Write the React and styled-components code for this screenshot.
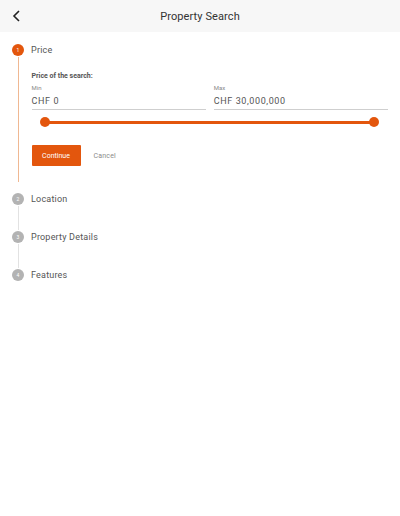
import styled, { createGlobalStyle } from "styled-components";

const GlobalStyle = createGlobalStyle`
  body {
    margin: 0;
    background: #fff;
    font-family: Roboto, "Liberation Sans", sans-serif;
  }
`;

const Page = styled.div`
  width: 400px;
  min-height: 516px;
  background: #fff;
`;

const Header = styled.div`
  height: 32px;
  background: #f7f7f7;
  display: flex;
  align-items: center;
  justify-content: center;
  position: relative;
`;

const Back = styled.button`
  position: absolute;
  left: 8px;
  top: 8px;
  width: 16px;
  height: 16px;
  padding: 0;
  border: none;
  background: none;
  display: flex;
  align-items: center;
  justify-content: center;
`;

const Title = styled.h1`
  margin: 0;
  font-size: 11px;
  font-weight: 400;
  color: #333;
  letter-spacing: 0.1px;
`;

const Stepper = styled.div`
  padding: 12px 12px 0 12px;
`;

const StepHead = styled.div`
  display: flex;
  align-items: center;
  height: 12px;
  gap: 7px;
`;

const Dot = styled.span`
  width: 12px;
  height: 12px;
  border-radius: 50%;
  background: ${(p) => (p.$active ? "#e3560d" : "#b3b3b3")};
  color: #fff;
  font-size: 5px;
  display: flex;
  align-items: center;
  justify-content: center;
  flex-shrink: 0;
`;

const Label = styled.span`
  font-size: 9px;
  color: #555;
  letter-spacing: 0.2px;
`;

const Body = styled.div`
  margin: 1px 0 11px 5.5px;
  border-left: 1px solid #f0b892;
  padding: 14px 0 16px 13px;
`;

const Connector = styled.div`
  margin: 1px 0 1px 5.5px;
  height: 24px;
  border-left: 1px solid #e2e2e2;
`;

const Caption = styled.div`
  font-size: 7px;
  font-weight: 700;
  color: #555;
  line-height: 10px;
`;

const Fields = styled.div`
  display: flex;
  gap: 8px;
  margin-top: 3px;
`;

const Field = styled.div`
  flex: 1;
  border-bottom: 1px solid #cfcfcf;
  padding-bottom: 2px;
`;

const FieldLabel = styled.div`
  font-size: 6px;
  color: #888;
  line-height: 8px;
`;

const FieldValue = styled.div`
  font-size: 9px;
  color: #555;
  line-height: 12px;
  margin-top: 3px;
  letter-spacing: 0.6px;
`;

const Slider = styled.div`
  position: relative;
  height: 10px;
  margin: 7px 9px 0 8px;
  display: flex;
  align-items: center;
`;

const Track = styled.div`
  flex: 1;
  height: 3px;
  margin: 0 5px;
  background: #e3560d;
`;

const Thumb = styled.span`
  position: absolute;
  top: 0;
  ${(p) => (p.$right ? "right: 0;" : "left: 0;")}
  width: 10px;
  height: 10px;
  border-radius: 50%;
  background: #e3560d;
`;

const Actions = styled.div`
  display: flex;
  align-items: center;
  gap: 13px;
  margin-top: 18px;
`;

const Primary = styled.button`
  height: 21px;
  width: 49px;
  padding: 0;
  border: none;
  border-radius: 1px;
  background: #e3560d;
  color: #fff;
  font-family: inherit;
  font-size: 7px;
`;

const Ghost = styled.button`
  padding: 0;
  border: none;
  background: none;
  color: #8a8a8a;
  font-family: inherit;
  font-size: 7px;
  letter-spacing: 0.2px;
`;

const steps = ["Location", "Property Details", "Features"];

export default function App() {
  return (
    <Page>
      <GlobalStyle />
      <Header>
        <Back aria-label="Back">
          <svg width="9" height="12" viewBox="0 0 9 12">
            <polyline points="7,1 2,6 7,11" fill="none" stroke="#222" strokeWidth="1.6" />
          </svg>
        </Back>
        <Title>Property Search</Title>
      </Header>
      <Stepper>
        <StepHead>
          <Dot $active>1</Dot>
          <Label>Price</Label>
        </StepHead>
        <Body>
          <Caption>Price of the search:</Caption>
          <Fields>
            <Field>
              <FieldLabel>Min</FieldLabel>
              <FieldValue>CHF 0</FieldValue>
            </Field>
            <Field>
              <FieldLabel>Max</FieldLabel>
              <FieldValue>CHF 30,000,000</FieldValue>
            </Field>
          </Fields>
          <Slider>
            <Thumb />
            <Track />
            <Thumb $right />
          </Slider>
          <Actions>
            <Primary>Continue</Primary>
            <Ghost>Cancel</Ghost>
          </Actions>
        </Body>
        {steps.map((s, i) => (
          <div key={s}>
            <StepHead>
              <Dot>{i + 2}</Dot>
              <Label>{s}</Label>
            </StepHead>
            {i < steps.length - 1 && <Connector />}
          </div>
        ))}
      </Stepper>
    </Page>
  );
}
